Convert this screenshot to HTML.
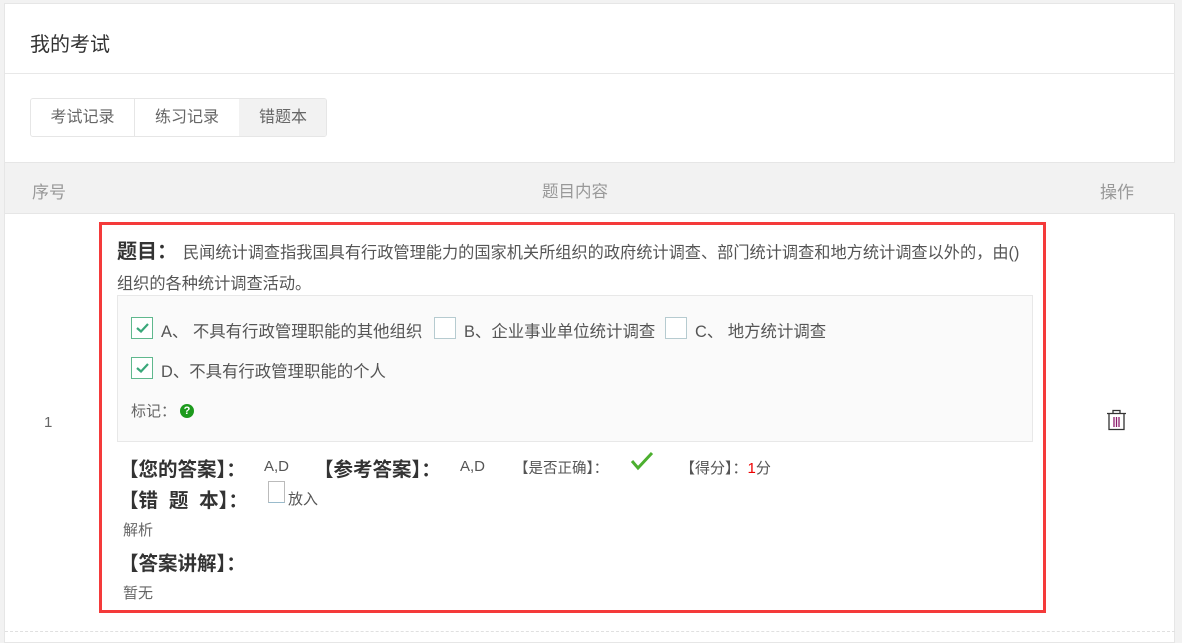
<!DOCTYPE html>
<html><head><meta charset="utf-8"><style>
*{margin:0;padding:0;box-sizing:border-box}
body{width:1182px;height:636px;background:#f2f2f2;font-family:"Liberation Sans","Noto Sans CJK SC",sans-serif;position:relative;overflow:hidden;color:#333}
.a{position:absolute;white-space:nowrap}
.card{position:absolute;left:4px;top:3px;width:1171px;height:640px;background:#fff;border:1px solid #e6e6e6}
.cb{position:absolute;width:22px;height:22px;border:1px solid #5fb88d;background:#fff}
.cb.e{border-color:#b6cbd0}
.cb svg{position:absolute;left:4px;top:5px}
.b{font-weight:bold;color:#333}
</style></head><body>
<div class="card"></div>
<div class="a" style="left:30px;top:28px;font-size:20px;color:#333">我的考试</div>
<div class="a" style="left:5px;top:73px;width:1170px;height:1px;background:#e8e8e8"></div>
<div class="a" style="left:30px;top:98px;width:297px;height:39px;border:1px solid #e6e6e6;border-radius:3px;overflow:hidden">
<div class="a" style="left:0;top:0;width:104px;height:37px;border-right:1px solid #e6e6e6;text-align:center;line-height:37px;font-size:16px;color:#666">考试记录</div>
<div class="a" style="left:104px;top:0;width:104px;height:37px;text-align:center;line-height:37px;font-size:16px;color:#666">练习记录</div>
<div class="a" style="left:208px;top:0;width:88px;height:37px;background:#f2f2f2;text-align:center;line-height:37px;font-size:16px;color:#666">错题本</div>
</div>
<div class="a" style="left:5px;top:162px;width:1170px;height:52px;background:#f2f2f2;border-top:1px solid #e6e6e6;border-bottom:1px solid #e6e6e6"></div>
<div class="a" style="left:32px;top:178px;font-size:17px;color:#999">序号</div>
<div class="a" style="left:542px;top:178px;font-size:16.5px;color:#999">题目内容</div>
<div class="a" style="left:1100px;top:178px;font-size:17px;color:#999">操作</div>
<div class="a" style="left:44px;top:414px;font-size:15px;color:#666">1</div>
<svg class="a" style="left:1106px;top:409px" width="21" height="22" viewBox="0 0 21 22"><path d="M7 4V1.5h7V4M1 4.5h19M3 4.5v16h15v-16" fill="none" stroke="#333" stroke-width="1.3"/><path d="M8 8v10M10.5 8v10M13 8v10" stroke="#8b1a6b" stroke-width="1.3"/></svg>
<div class="a" style="left:99px;top:222px;width:947px;height:391px;border:3px solid #f43a3a"></div>
<div class="a" style="left:117px;top:235px;font-size:20px" ><span class="b">题目：</span></div>
<div class="a" style="left:183px;top:239px;font-size:16.2px;color:#555">民闻统计调查指我国具有行政管理能力的国家机关所组织的政府统计调查、部门统计调查和地方统计调查以外的，由()</div>
<div class="a" style="left:117px;top:270px;font-size:16.2px;color:#555">组织的各种统计调查活动。</div>
<div class="a" style="left:117px;top:295px;width:916px;height:147px;background:#fafafa;border:1px solid #e8e8e8"></div>
<div class="cb" style="left:131px;top:317px"><svg width="13" height="10"><path d="M1 5l4 3.5L12 1" fill="none" stroke="#3aa87a" stroke-width="2.2"/></svg></div>
<div class="a" style="left:161px;top:318px;font-size:16.4px;color:#555">A、 不具有行政管理职能的其他组织</div>
<div class="cb e" style="left:434px;top:317px"></div>
<div class="a" style="left:464px;top:318px;font-size:16.4px;color:#555">B、企业事业单位统计调查</div>
<div class="cb e" style="left:665px;top:317px"></div>
<div class="a" style="left:695px;top:318px;font-size:16.4px;color:#555">C、 地方统计调查</div>
<div class="cb" style="left:131px;top:357px"><svg width="13" height="10"><path d="M1 5l4 3.5L12 1" fill="none" stroke="#3aa87a" stroke-width="2.2"/></svg></div>
<div class="a" style="left:161px;top:358px;font-size:16.4px;color:#555">D、不具有行政管理职能的个人</div>
<div class="a" style="left:131px;top:400px;font-size:15px;color:#666">标记：</div>
<div class="a" style="left:180px;top:404px;width:14px;height:14px;border-radius:50%;background:#1c9a1c;color:#fff;font-size:11px;font-weight:bold;text-align:center;line-height:14px">?</div>
<div class="a" style="left:119px;top:453px;font-size:19.5px"><span class="b">【您的答案】：</span></div>
<div class="a" style="left:264px;top:458px;font-size:15px;color:#555">A,D</div>
<div class="a" style="left:314px;top:453px;font-size:19.5px"><span class="b">【参考答案】：</span></div>
<div class="a" style="left:460px;top:458px;font-size:15px;color:#555">A,D</div>
<div class="a" style="left:514px;top:457px;font-size:14.5px;color:#555">【是否正确】：</div>
<svg class="a" style="left:630px;top:451px" width="24" height="20"><path d="M2 10l6 7L22 2" fill="none" stroke="#4caf2f" stroke-width="3"/></svg>
<div class="a" style="left:680px;top:457px;font-size:15px;color:#555">【得分】：<span style="color:#e00">1</span>分</div>
<div class="a" style="left:119px;top:484px;font-size:19.5px"><span class="b">【错 &nbsp;题 &nbsp;本】：</span></div>
<div class="a" style="left:268px;top:481px;width:17px;height:22px;border:1px solid #bbb;border-bottom-color:#9bc"></div>
<div class="a" style="left:288px;top:488px;font-size:15px;color:#555">放入</div>
<div class="a" style="left:123px;top:519px;font-size:15px;color:#666">解析</div>
<div class="a" style="left:119px;top:547px;font-size:19.5px"><span class="b">【答案讲解】：</span></div>
<div class="a" style="left:123px;top:582px;font-size:15px;color:#666">暂无</div>
<div class="a" style="left:5px;top:631px;width:1170px;height:0;border-top:1px dashed #e0e0e0"></div>
</body></html>
